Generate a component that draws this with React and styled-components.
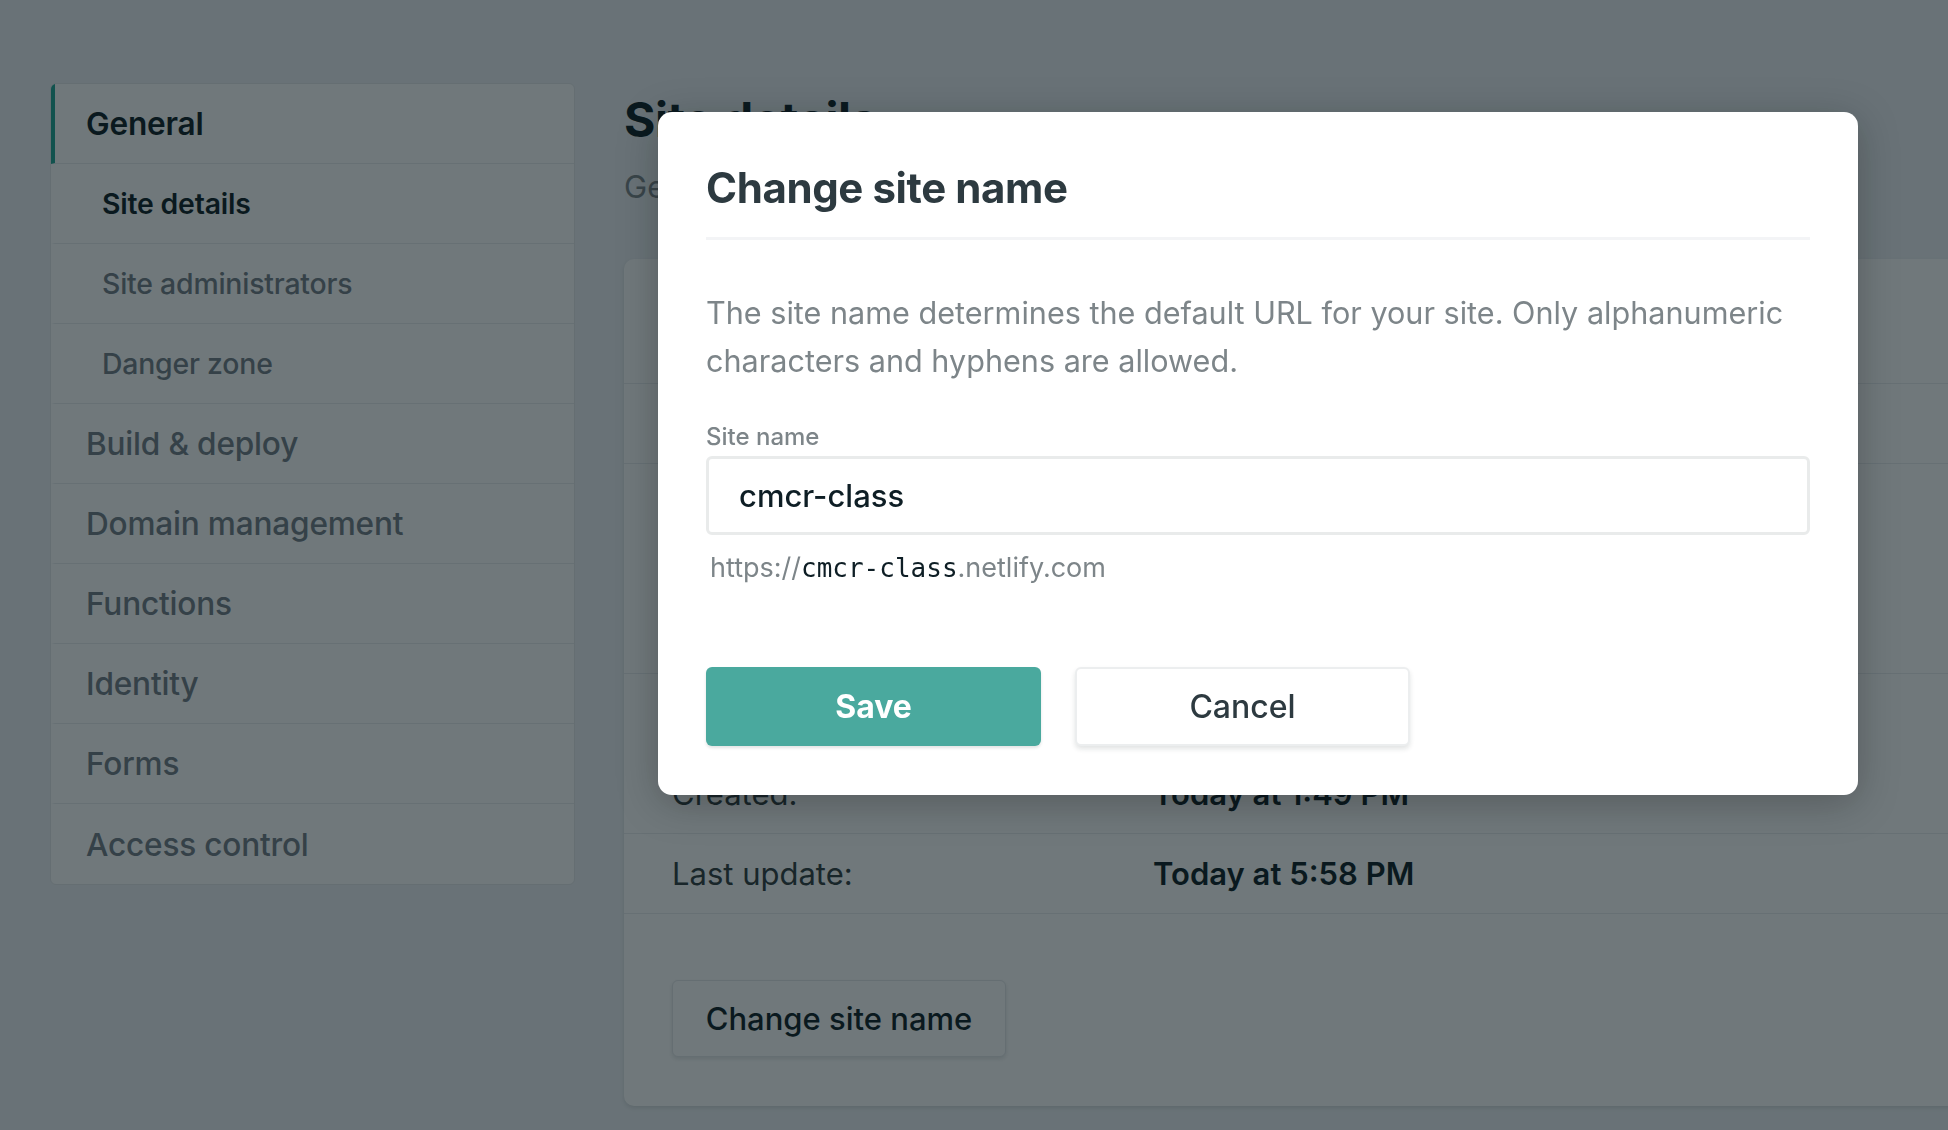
import styled, { createGlobalStyle } from "styled-components";

const Global = createGlobalStyle`
  html, body {
    margin: 0;
    padding: 0;
    overflow: hidden;
    background: #eef1f5;
  }
  body {
    font-family: Inter, "Noto Sans", "Liberation Sans", sans-serif;
    color: #0e1e25;
  }
  * { box-sizing: border-box; }
`;

const Page = styled.div`
  display: flex;
  align-items: flex-start;
  gap: 49px;
  width: 2100px;
  height: 1130px;
  padding: 83px 0 0 50px;
`;

const Sidebar = styled.nav`
  flex: 0 0 525px;
  background: #fff;
  border: 1px solid #e4e7ea;
  border-radius: 6px;
  overflow: hidden;
`;

const NavItem = styled.a`
  display: flex;
  align-items: center;
  height: 80px;
  padding-left: ${(p) => (p.$sub ? 47 : 31)}px;
  border-bottom: 1px solid #e9ecef;
  border-left: 4px solid ${(p) => (p.$active && !p.$sub ? "#20a594" : "transparent")};
  font-size: ${(p) => (p.$sub ? 28.4 : 31.6)}px;
  font-weight: ${(p) => (p.$active ? 600 : 500)};
  color: ${(p) => (p.$active ? "#0e1e25" : "#737c86")};
  letter-spacing: -0.2px;
  text-decoration: none;
  &:last-child { border-bottom: none; }
`;

const Main = styled.main`
  flex: 0 0 1400px;
  padding-top: 8px;
`;

const Heading = styled.h1`
  margin: 0;
  font-size: 48px;
  line-height: 58px;
  font-weight: 700;
  letter-spacing: -0.5px;
  color: #0e1e25;
`;

const Subtitle = styled.p`
  margin: 18px 0 0;
  font-size: 31px;
  line-height: 40px;
  color: #7d8589;
`;

const Card = styled.section`
  margin-top: 52px;
  background: #fff;
  border-radius: 10px;
  box-shadow: 0 2px 4px rgba(14, 30, 37, 0.12);
  padding-bottom: 49px;
`;

const CardHeader = styled.div`
  height: 125px;
  display: flex;
  align-items: center;
  padding: 0 48px;
  border-bottom: 1px solid #e9ecef;
  font-size: 36px;
  font-weight: 700;
`;

const InfoRow = styled.div`
  display: grid;
  grid-template-columns: 481px 1fr;
  align-items: center;
  height: ${(p) => p.$h || 80}px;
  padding: 0 48px;
  border-bottom: 1px solid ${(p) => (p.$plain ? "transparent" : "#e9ecef")};
  font-size: 31px;
`;

const InfoLabel = styled.span`
  color: #313d3e;
`;

const InfoValue = styled.span`
  font-weight: 600;
  color: #0e1e25;
`;

const CardActions = styled.div`
  padding: 66px 48px 0;
`;

const GhostButton = styled.button`
  width: 334px;
  height: 77px;
  background: #fff;
  border: 1px solid #e4e7ea;
  border-radius: 6px;
  box-shadow: 0 2px 4px rgba(14, 30, 37, 0.12);
  font-family: inherit;
  font-size: 31px;
  font-weight: 500;
  color: #0e1e25;
`;

const Overlay = styled.div`
  position: fixed;
  inset: 0;
  background: rgba(8, 22, 28, 0.58);
  display: flex;
  align-items: flex-start;
  padding: 112px 0 0 658px;
`;

const Modal = styled.div`
  width: 1200px;
  background: #fff;
  border-radius: 14px;
  padding: 50px 48px 49px;
  box-shadow: 0 8px 40px rgba(0, 0, 0, 0.25);
`;

const ModalTitle = styled.h2`
  margin: 0;
  padding-bottom: 23px;
  border-bottom: 3px solid #f3f4f6;
  font-size: 42px;
  line-height: 52px;
  font-weight: 700;
  letter-spacing: -0.4px;
  color: #2d3a40;
`;

const Description = styled.p`
  margin: 49px 0 0;
  font-size: 30.6px;
  line-height: 48px;
  color: #7d8589;
`;

const Label = styled.label`
  display: block;
  margin-top: 36px;
  font-size: 24px;
  line-height: 32px;
  font-weight: 500;
  color: #7d8589;
`;

const Input = styled.input`
  display: block;
  width: 100%;
  height: 79px;
  margin-top: 3px;
  padding: 0 30px;
  border: 3px solid #e9ebeb;
  border-radius: 6px;
  font-family: inherit;
  font-size: 31px;
  font-weight: 500;
  color: #0e1e25;
  outline: none;
`;

const Hint = styled.p`
  margin: 15px 0 0 4px;
  font-size: 27px;
  line-height: 36px;
  color: #7d8589;
`;

const Mono = styled.span`
  font-family: "DejaVu Sans Mono", "Liberation Mono", monospace;
  font-size: 26px;
  color: #0e1e25;
`;

const Actions = styled.div`
  display: flex;
  gap: 34px;
  margin-top: 81px;
`;

const Button = styled.button`
  width: 335px;
  height: 79px;
  border-radius: 6px;
  font-family: inherit;
  font-size: 32px;
  font-weight: ${(p) => (p.$primary ? 700 : 500)};
  background: ${(p) => (p.$primary ? "#4aa99e" : "#fff")};
  color: ${(p) => (p.$primary ? "#fff" : "#2d3a40")};
  border: ${(p) => (p.$primary ? "none" : "2px solid #eceeef")};
  box-shadow: ${(p) => (p.$primary ? "0 2px 3px rgba(14,30,37,0.12)" : "0 3px 5px rgba(14,30,37,0.12)")};
`;

const nav = [
  { label: "General", active: true },
  { label: "Site details", sub: true, active: true },
  { label: "Site administrators", sub: true },
  { label: "Danger zone", sub: true },
  { label: "Build & deploy" },
  { label: "Domain management" },
  { label: "Functions" },
  { label: "Identity" },
  { label: "Forms" },
  { label: "Access control" },
];

const rows = [
  { label: "Site name:", value: "cmcr-class" },
  { label: "Owner:", value: "cmcr", plain: true },
  { label: "Site ID:", value: "", h: 130 },
  { label: "Repository:", value: "", plain: true },
  { label: "Created:", value: "Today at 1:49 PM" },
  { label: "Last update:", value: "Today at 5:58 PM" },
];

export default function App() {
  return (
    <>
      <Global />
      <Page>
        <Sidebar>
          {nav.map((n) => (
            <NavItem key={n.label} $sub={n.sub} $active={n.active} href="#">
              {n.label}
            </NavItem>
          ))}
        </Sidebar>
        <Main>
          <Heading>Site details</Heading>
          <Subtitle>General information about your site</Subtitle>
          <Card>
            <CardHeader>Site information</CardHeader>
            {rows.map((r) => (
              <InfoRow key={r.label} $h={r.h} $plain={r.plain}>
                <InfoLabel>{r.label}</InfoLabel>
                <InfoValue>{r.value}</InfoValue>
              </InfoRow>
            ))}
            <CardActions>
              <GhostButton>Change site name</GhostButton>
            </CardActions>
          </Card>
        </Main>
      </Page>
      <Overlay>
        <Modal>
          <ModalTitle>Change site name</ModalTitle>
          <Description>
            The site name determines the default URL for your site. Only alphanumeric
            characters and hyphens are allowed.
          </Description>
          <Label htmlFor="site-name">Site name</Label>
          <Input id="site-name" defaultValue="cmcr-class" />
          <Hint>
            https://<Mono>cmcr-class</Mono>.netlify.com
          </Hint>
          <Actions>
            <Button $primary>Save</Button>
            <Button>Cancel</Button>
          </Actions>
        </Modal>
      </Overlay>
    </>
  );
}
